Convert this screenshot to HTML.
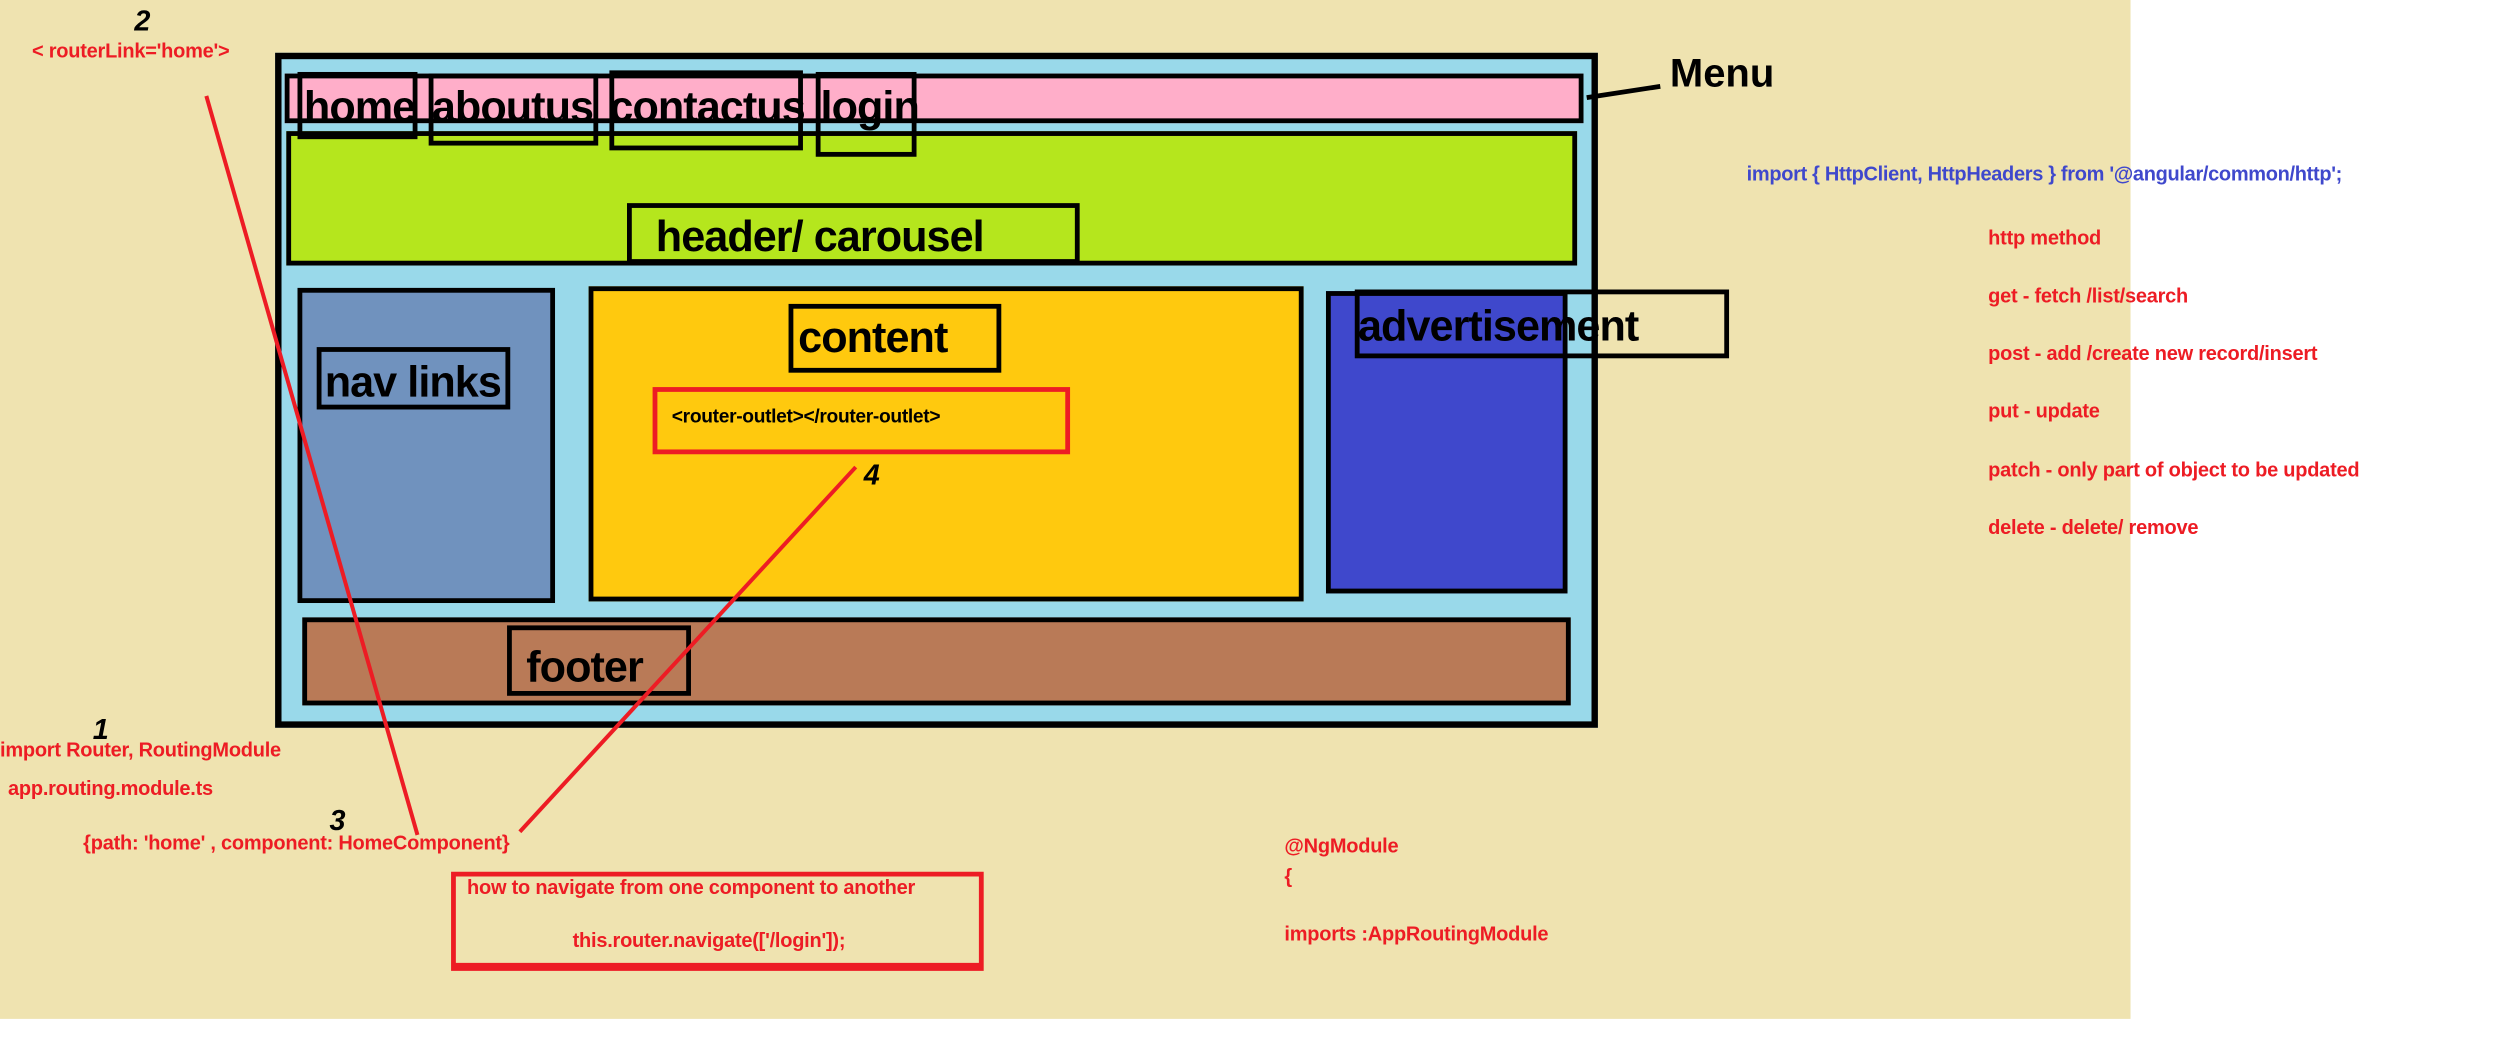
<!DOCTYPE html>
<html><head><meta charset="utf-8"><style>
html,body{margin:0;padding:0;background:#fff;overflow:hidden}
body{width:2508px;height:1048px;position:relative}
#s{position:absolute;left:0;top:0;width:1568px;height:655px;transform:scale(1.5995);transform-origin:0 0;font-family:"Liberation Sans",sans-serif;font-weight:bold}
.b{position:absolute;box-sizing:border-box}
.t{position:absolute;white-space:nowrap;line-height:1}
.r{color:#ED1C24;font-size:12.5px;letter-spacing:-0.15px}
.big{font-size:27px;letter-spacing:-0.6px;color:#000}
.n{font-style:italic;font-size:18px;color:#000}
</style></head><body><div id="s">
<div class="b" style="left:0;top:0;width:1332px;height:637px;background:#EFE3B0"></div>
<div class="b" style="left:172px;top:33px;width:827px;height:422px;background:#99D9EA;border:4px solid #000"></div>
<div class="b" style="left:178px;top:46px;width:812px;height:31px;background:#FFAEC9;border:3px solid #000"></div>
<div class="b" style="left:179px;top:82px;width:807px;height:84px;background:#B5E61D;border:3px solid #000"></div>
<div class="b" style="left:186px;top:180px;width:161px;height:197px;background:#7092BE;border:3px solid #000"></div>
<div class="b" style="left:368px;top:179px;width:447px;height:197px;background:#FFC90E;border:3px solid #000"></div>
<div class="b" style="left:829px;top:182px;width:151px;height:189px;background:#3F48CC;border:3px solid #000"></div>
<div class="b" style="left:189px;top:386px;width:793px;height:55px;background:#B97A57;border:3px solid #000"></div>
<div class="b" style="left:186px;top:45px;width:75px;height:42px;border:3px solid #000"></div>
<div class="b" style="left:268px;top:46px;width:106px;height:45px;border:3px solid #000"></div>
<div class="b" style="left:381px;top:44px;width:121px;height:50px;border:3px solid #000"></div>
<div class="b" style="left:510px;top:45px;width:63px;height:53px;border:3px solid #000"></div>
<div class="t big" style="left:190px;top:54px">home</div>
<div class="t big" style="left:270px;top:54px">aboutus</div>
<div class="t big" style="left:381px;top:54px">contactus</div>
<div class="t big" style="left:513px;top:54px">login</div>
<div class="b" style="left:392px;top:127px;width:283px;height:38px;border:3px solid #000"></div>
<div class="t big" style="left:410px;top:135px">header/ carousel</div>
<div class="b" style="left:198px;top:217px;width:121px;height:39px;border:3px solid #000"></div>
<div class="t big" style="left:203px;top:226px">nav links</div>
<div class="b" style="left:493px;top:190px;width:133px;height:43px;border:3px solid #000"></div>
<div class="t big" style="left:499px;top:198px">content</div>
<div class="b" style="left:408px;top:242px;width:261px;height:42px;border:3px solid #ED1C24"></div>
<div class="t" style="left:420px;top:254px;font-size:12px;letter-spacing:-0.2px;color:#000">&lt;router-outlet&gt;&lt;/router-outlet&gt;</div>
<div class="b" style="left:847px;top:181px;width:234px;height:43px;border:3px solid #000"></div>
<div class="t big" style="left:849px;top:191px">advertisement</div>
<div class="b" style="left:317px;top:391px;width:115px;height:44px;border:3px solid #000"></div>
<div class="t big" style="left:329px;top:404px">footer</div>
<div class="t" style="left:1044px;top:34px;font-size:25px;color:#000">Menu</div>
<div class="t" style="left:1092px;top:103px;font-size:12.5px;letter-spacing:-0.2px;color:#3F48CC">import { HttpClient, HttpHeaders } from '@angular/common/http';</div>
<div class="t r" style="left:1243px;top:143px">http method</div>
<div class="t r" style="left:1243px;top:179px">get - fetch /list/search</div>
<div class="t r" style="left:1243px;top:215px">post - add /create new record/insert</div>
<div class="t r" style="left:1243px;top:251px">put - update</div>
<div class="t r" style="left:1243px;top:288px">patch - only part of object to be updated</div>
<div class="t r" style="left:1243px;top:324px">delete - delete/ remove</div>
<div class="t r" style="left:20px;top:26px">&lt; routerLink='home'&gt;</div>
<div class="t n" style="left:84px;top:4px">2</div>
<div class="t n" style="left:540px;top:288px">4</div>
<div class="t n" style="left:58px;top:447px">1</div>
<div class="t n" style="left:206px;top:504px">3</div>
<div class="t r" style="left:0;top:463px">import Router, RoutingModule</div>
<div class="t r" style="left:5px;top:487px">app.routing.module.ts</div>
<div class="t r" style="left:52px;top:521px">{path: 'home'  , component: HomeComponent}</div>
<div class="b" style="left:282px;top:545px;width:333px;height:62px;border:3px solid #ED1C24;border-bottom-width:5px"></div>
<div class="t r" style="left:292px;top:549px">how to navigate from one component to another</div>
<div class="t r" style="left:358px;top:582px">this.router.navigate(['/login']);</div>
<div class="t r" style="left:803px;top:523px">@NgModule</div>
<div class="t r" style="left:803px;top:542px">{</div>
<div class="t r" style="left:803px;top:578px">imports :AppRoutingModule</div>
<svg width="1568" height="655" style="position:absolute;left:0;top:0">
<line x1="992" y1="61" x2="1038" y2="54" stroke="#000" stroke-width="3"/>
<line x1="129" y1="60" x2="261" y2="522" stroke="#ED1C24" stroke-width="2.5"/>
<line x1="325" y1="520" x2="535" y2="292" stroke="#ED1C24" stroke-width="2.5"/>
</svg>
</div></body></html>
